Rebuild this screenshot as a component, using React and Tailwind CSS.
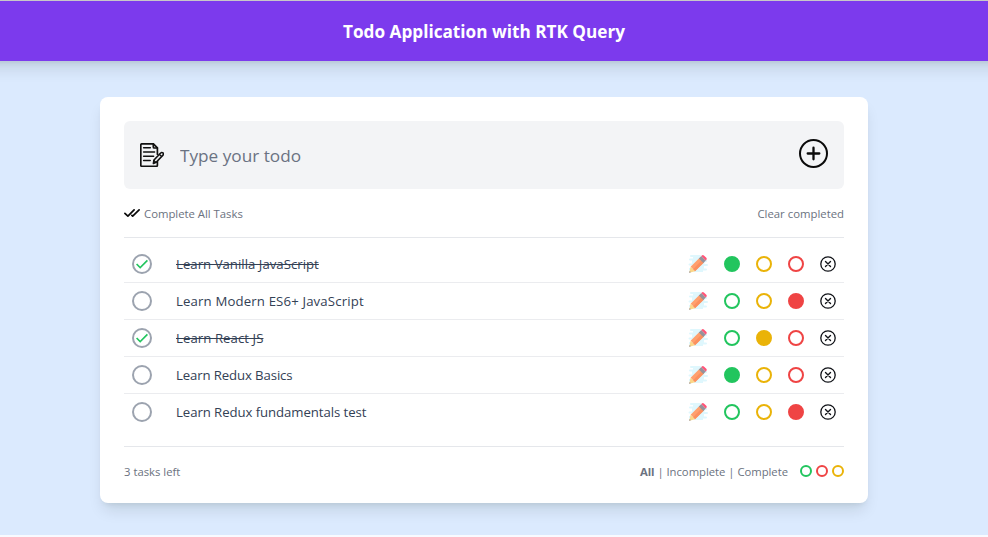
import React from "react";

const TASKS = [
  { text: "Learn Vanilla JavaScript", done: true, color: "green", track: "tracking-[0.02px]" },
  { text: "Learn Modern ES6+ JavaScript", done: false, color: "red", track: "tracking-[0.15px]" },
  { text: "Learn React JS", done: true, color: "yellow", track: "tracking-[0.06px]" },
  { text: "Learn Redux Basics", done: false, color: "green", track: "tracking-[-0.12px]" },
  { text: "Learn Redux fundamentals test", done: false, color: "red", track: "tracking-[-0.07px]" },
];

const RINGS = {
  green: ["border-[#22c55e]", "bg-[#22c55e]"],
  yellow: ["border-[#eab308]", "bg-[#eab308]"],
  red: ["border-[#ef4444]", "bg-[#ef4444]"],
};

function Dot({ color, filled, size = "size-4" }) {
  const [border, bg] = RINGS[color];
  return <div className={`${size} shrink-0 rounded-full border-2 ${border} ${filled ? bg : ""}`} />;
}

function NotesIcon() {
  return (
    <svg className="size-6 shrink-0" viewBox="0 0 24 24" fill="none" stroke="#111" strokeWidth="1.7" strokeLinecap="round" strokeLinejoin="round">
      <path d="M17.4 18.400v3.800a1.1 1.1 0 0 1-1.1 1.1H1.9A1.1 1.1 0 0 1 .8 22.200V1.900A1.100 1.100 0 0 1 1.900.8h11.500l4 4v6.400" />
      <path d="M13.300.9v3.100a1 1 0 0 0 1 1h3" />
      <path d="M3.600 4.800h6.700M3.600 9.100h11M3.600 13.300h10M3.600 17.500h6.600" strokeWidth="1.500" />
      <path d="m14 17 6.700-7a1.550 1.550 0 0 1 2.300 2.100l-6.800 7.200-2.800 1.200z" fill="#f3f4f6" strokeWidth="1.600" />
      <path d="m19.200 11.200 2.200 2M13.800 17.500l2 1.800" strokeWidth="1.200" />
    </svg>
  );
}

function PlusIcon() {
  return (
    <svg className="size-8 shrink-0" viewBox="0 0 32 32" fill="none" stroke="#0a0a0a" strokeWidth="2" strokeLinecap="round">
      <circle cx="17.500" cy="14.500" r="13.500" />
      <path d="M17.500 8.700v11.600M11.700 14.500h11.600" strokeWidth="2.300" />
    </svg>
  );
}

function DoubleTick() {
  return (
    <svg className="size-4 shrink-0" viewBox="0 0 16 16" fill="none" stroke="#0a0a0a" strokeWidth="1.700" strokeLinecap="round" strokeLinejoin="round">
      <path d="m.9 7.300 3 2.900 6.200-6.300M7.900 9.400l.8.8 6.400-6.300" />
    </svg>
  );
}

function PencilIcon() {
  return (
    <svg className="size-5 shrink-0" viewBox="0 0 20 20">
      <path fill="#dff7fd" d="M3 1h9a1 1 0 0 1 0 2h3v3h3a1 1 0 0 1 0 2.200h-1.500V10H19a1 1 0 0 1 0 2h-3v2.500h2a1 1 0 0 1 0 2h-3V18H5.500v-1.500H1V14h3v-2.500H1.500a1 1 0 0 1 0-2H4V6.500H2a1 1 0 0 1 0-2h3V3H3a1 1 0 0 1 0-2z" />
      <path fill="#ffa06e" d="m2.600 12.800 8.800-8.900 4.500 4.500-8.900 8.800z" />
      <path fill="#fb9060" d="m5 15.200 8.800-8.900 2.100 2.100-8.900 8.800z" />
      <path fill="#fcd688" d="m2.600 12.800 4.400 4.400L1.300 18.700z" />
      <path fill="#8a868e" d="m1.700 17.100 1.200 1.100-1.800.6z" />
      <path fill="#96929a" d="m10.800 4.500 2.500-2.500 4.500 4.400-2.500 2.500z" />
      <path fill="#ff5477" d="m13.300 2 .5-.5a1.500 1.500 0 0 1 2.100 0l2.400 2.300a1.500 1.500 0 0 1 0 2.100l-.5.500z" />
    </svg>
  );
}

function CancelIcon() {
  return (
    <svg className="size-4 shrink-0" viewBox="0 0 16 16" fill="none" stroke="#111318" strokeWidth="1.300" strokeLinecap="round">
      <circle cx="8" cy="8" r="7.200" />
      <path d="m5.500 5.500 5 5M10.500 5.500l-5 5" strokeWidth="1.400" />
    </svg>
  );
}

function Task({ task }) {
  return (
    <div className="flex h-[37px] items-center border-b border-gray-400/20 px-2 last:h-9 last:border-0">
      <div className="flex size-5 shrink-0 items-center justify-center rounded-full border-2 border-[#9ca3af]">
        {task.done && (
          <svg className="size-3 fill-[#22c55e]" viewBox="0 0 20 20">
            <path d="M0 11l2-2 5 5L18 3l2 2L7 18z" />
          </svg>
        )}
      </div>
      <div className={`ml-6 flex-1 whitespace-nowrap text-[13.2px] leading-5 text-[#334155] ${task.track}`}>
        <span className={task.done ? "line-through" : ""}>{task.text}</span>
      </div>
      <div className="flex items-center gap-4">
        <PencilIcon />
        <Dot color="green" filled={task.color === "green"} />
        <Dot color="yellow" filled={task.color === "yellow"} />
        <Dot color="red" filled={task.color === "red"} />
        <CancelIcon />
      </div>
    </div>
  );
}

export default function App() {
  return (
    <div className="h-[537px] overflow-hidden bg-[#f8faff] font-['Open_Sans','Noto_Sans',sans-serif]">
      <div className="flex h-[535px] flex-col bg-[#dbeafe]">
        <header className="-mx-10 flex h-[61px] items-center justify-center border-t border-[#c8c8c8] bg-[#7c3aed] pr-5 shadow-[0_10px_15px_-3px_rgba(10,25,0,0.12),0_4px_6px_-4px_rgba(10,25,0,0.12)]">
          <h1 className="whitespace-nowrap pt-0.5 text-[17.2px] font-bold text-white">Todo Application with RTK Query</h1>
        </header>
        <main className="mt-9 ml-[100px] h-[406px] w-3xl rounded-lg bg-white p-6 shadow-[0_10px_15px_-3px_rgba(10,25,0,0.11),0_4px_6px_-4px_rgba(10,25,0,0.11)]">
          <div className="flex h-[68px] items-center rounded-md bg-[#f3f4f6] px-4">
            <NotesIcon />
            <input className="ml-4 min-w-0 flex-1 bg-transparent pt-0.5 text-[17.2px] placeholder:text-gray-500 focus:outline-none" placeholder="Type your todo" />
            <PlusIcon />
          </div>
          <div className="flex h-12 items-center justify-between pt-0.5 text-[11.35px] text-[#6b7280]">
            <div className="flex items-center gap-1">
              <DoubleTick />
              <span className="tracking-[-0.02px]">Complete All Tasks</span>
            </div>
            <span>Clear completed</span>
          </div>
          <hr className="border-[#e5e7eb]" />
          <div className="pt-2 pb-4">
            {TASKS.map((task) => (
              <Task key={task.text} task={task} />
            ))}
          </div>
          <hr className="border-[#e5e7eb]" />
          <div className="mt-4 flex h-4 items-center justify-between text-[11.3px] leading-4 text-[#6b7280]">
            <span className="pt-0.5">3 tasks left</span>
            <div className="flex items-center gap-3">
              <div className="whitespace-nowrap pt-0.5 tracking-[-0.03px]">
                <b>All</b> | Incomplete | Complete
              </div>
              <div className="flex gap-1">
                <Dot color="green" size="size-3" />
                <Dot color="red" size="size-3" />
                <Dot color="yellow" size="size-3" />
              </div>
            </div>
          </div>
        </main>
      </div>
    </div>
  );
}
